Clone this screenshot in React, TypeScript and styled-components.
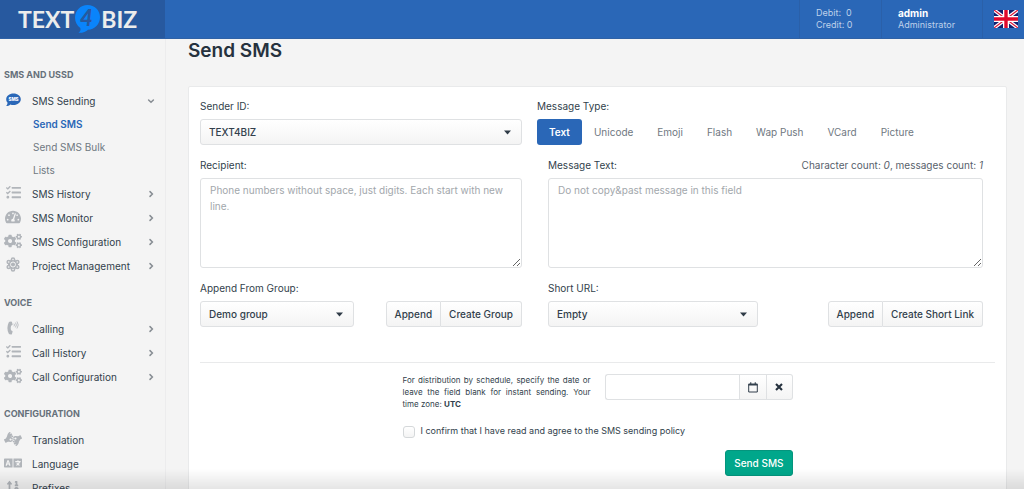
import React, { useState } from "react";
import styled, { createGlobalStyle } from "styled-components";
import {
  FaTasks,
  FaTachometerAlt,
  FaCogs,
  FaAmericanSignLanguageInterpreting,
  FaLanguage,
  FaSortNumericUp,
} from "react-icons/fa";

const color = {
  brand: "#2a67b7",
  brandDark: "#27599f",
  text: "#323f4c",
  muted: "#6f7881",
  page: "#f4f4f4",
  border: "#dfe1e3",
  icon: "#b1b5ba",
};

const GlobalStyle = createGlobalStyle`
  *, *::before, *::after { box-sizing: border-box; }
  body {
    margin: 0;
    background: ${color.page};
    color: ${color.text};
    font: 400 10px/16px Inter, "Liberation Sans", sans-serif;
  }
  button, input, select, textarea { font: inherit; color: inherit; margin: 0; }
  h1, h2, ul, p { margin: 0; padding: 0; }
  ul { list-style: none; }
  a { color: inherit; text-decoration: none; }
`;

const Page = styled.div`
  display: flex;
  flex-direction: column;
  height: 100vh;
  overflow: hidden;
`;

const Header = styled.header`
  display: flex;
  flex: none;
  height: 39px;
  background: ${color.brand};
  border-bottom: 1px solid #2f62a6;
  color: #fff;
`;

const Logo = styled.a`
  display: flex;
  align-items: center;
  flex: none;
  width: 165px;
  padding-left: 18px;
  background: ${color.brandDark};
  color: #ececec;
  font: 700 23px/38px Lato, sans-serif;
`;

const HeaderCell = styled.div<{ $width: number; $push?: boolean }>`
  display: flex;
  flex-direction: column;
  justify-content: center;
  width: ${(p) => p.$width}px;
  margin-left: ${(p) => (p.$push ? "auto" : "0")};
  padding-left: 16px;
  border-left: 1px solid #2a60a9;
  color: #bfd1ea;
  font-size: 9px;
  line-height: 12px;
  white-space: pre;
`;

const UserName = styled.strong`
  color: #fff;
  font-size: 10px;
  font-weight: 700;
`;

const LanguageButton = styled.button`
  display: flex;
  align-items: center;
  justify-content: flex-end;
  width: 42px;
  padding: 0 6px 0 0;
  border: 0;
  border-left: 1px solid #2a60a9;
  background: none;
`;

const Body = styled.div`
  display: flex;
  flex: 1;
  min-height: 0;
`;

const Sidebar = styled.nav`
  display: flex;
  flex-direction: column;
  gap: 13px;
  flex: none;
  width: 166px;
  padding-top: 24px;
  border-right: 1px solid #ececed;
  overflow: hidden;
`;

const SectionTitle = styled.h2`
  margin-bottom: 2px;
  padding-left: 4px;
  color: #66707a;
  font-size: 9px;
  font-weight: 700;
  line-height: 24px;
  text-transform: uppercase;
`;

const NavLink = styled.a`
  display: grid;
  grid-template-columns: 18px 1fr 12px;
  column-gap: 10px;
  align-items: center;
  height: 24px;
  padding: 0 7px 0 4px;
  white-space: nowrap;
`;

const NavIcon = styled.span<{ $active?: boolean }>`
  display: flex;
  justify-content: center;
  padding-bottom: 3px;
  color: ${(p) => (p.$active ? color.brand : color.icon)};
`;

const SubLink = styled.a<{ $active?: boolean }>`
  display: block;
  padding-left: 33px;
  color: ${(p) => (p.$active ? color.brand : color.muted)};
  font-weight: ${(p) => (p.$active ? 600 : 400)};
  line-height: 23px;
`;

const Main = styled.main`
  flex: 1;
  min-width: 0;
  padding: 0 17px 0 22px;
  overflow: hidden;
`;

const Title = styled.h1`
  margin-bottom: 23px;
  color: #26323e;
  font-size: 19px;
  font-weight: 600;
  line-height: 24px;
`;

const Card = styled.form`
  padding: 11px 11px 24px;
  border: 1px solid #e9eaeb;
  border-radius: 2px;
  background: #fff;
`;

const Columns = styled.div`
  display: grid;
  grid-template-columns: 322fr 458fr;
  column-gap: 15px;
`;

const Field = styled.div<{ $inset?: boolean }>`
  display: flex;
  flex-direction: column;
  gap: 5px;
  min-width: 0;
  margin-bottom: 12px;
  padding: ${(p) => (p.$inset ? "0 12px 0 11px" : "0")};
`;

const FieldHead = styled.div`
  display: flex;
  justify-content: space-between;
`;

const Counter = styled.span`
  color: #57616b;
`;

const SelectBox = styled.div<{ $width?: string }>`
  display: flex;
  position: relative;
  width: ${(p) => p.$width ?? "100%"};
`;

const Select = styled.select`
  width: 100%;
  height: 26px;
  padding: 0 8px;
  border: 1px solid ${color.border};
  border-radius: 3px;
  background: linear-gradient(#fff, #f4f4f4);
  font-weight: 500;
  appearance: none;
`;

const Caret = styled.svg`
  position: absolute;
  top: 11px;
  right: 11px;
  pointer-events: none;
`;

const Tabs = styled.div`
  display: flex;
`;

const Tab = styled.button<{ $active?: boolean }>`
  height: 26px;
  padding: 0 12px;
  border: 0;
  border-radius: 3px;
  background: ${(p) => (p.$active ? color.brand : "transparent")};
  color: ${(p) => (p.$active ? "#fff" : color.muted)};
  font-weight: ${(p) => (p.$active ? 600 : 400)};
`;

const TextArea = styled.textarea`
  display: block;
  width: 100%;
  height: 90px;
  padding: 3px 9px;
  border: 1px solid ${color.border};
  border-radius: 3px;
  background: #fff;
  line-height: 16px;
  resize: both;
  &::placeholder { color: #a2a7ac; }
`;

const Actions = styled.div`
  display: flex;
  justify-content: space-between;
`;

const ButtonGroup = styled.div`
  display: flex;
`;

const Button = styled.button`
  display: flex;
  align-items: center;
  justify-content: center;
  height: 26px;
  min-width: 26px;
  padding: 0 8px;
  border: 1px solid ${color.border};
  background: linear-gradient(#fff, #f4f4f4);
  font-weight: 500;
  white-space: nowrap;
  & + & { border-left: 0; }
  &:first-child { border-radius: 3px 0 0 3px; }
  &:last-child { border-radius: 0 3px 3px 0; }
`;

const Divider = styled.hr`
  height: 1px;
  margin: 23px 0 11px;
  border: 0;
  background: #e9eaeb;
`;

const Footer = styled.div`
  display: flex;
  flex-direction: column;
  max-width: 390px;
  margin: 0 auto;
`;

const Schedule = styled.div`
  display: grid;
  grid-template-columns: minmax(0, 1fr) minmax(0, 1fr);
  column-gap: 14px;
`;

const ScheduleNote = styled.label`
  font-size: 8px;
  line-height: 12px;
  text-align: justify;
`;

const DateInput = styled.input`
  flex: 1;
  min-width: 0;
  height: 26px;
  padding: 0 9px;
  border: 1px solid ${color.border};
  border-right-width: 0;
  border-radius: 3px 0 0 3px;
  background: #fff;
`;

const Consent = styled.label`
  display: flex;
  gap: 6px;
  margin: 14px 0 12px;
  font-size: 9px;
  line-height: 13px;
`;

const Checkbox = styled.input`
  width: 12px;
  height: 12px;
  margin-top: 2px;
  border: 1px solid #d5d8da;
  border-radius: 3px;
  background: linear-gradient(#fff, #f4f4f4);
  appearance: none;
  &:checked { background: ${color.brand}; }
`;

const Submit = styled.button`
  align-self: flex-end;
  height: 26px;
  padding: 0 8px;
  border: 1px solid #04957d;
  border-radius: 3px;
  background: #00a78b;
  color: #fff;
  font-weight: 500;
`;

const BottomShade = styled.div`
  position: fixed;
  right: 0;
  bottom: 0;
  left: 0;
  height: 20px;
  background: linear-gradient(rgba(0, 0, 0, 0), rgba(0, 0, 0, 0.1));
  pointer-events: none;
`;

const LogoBubble = () => (
  <svg width="27" height="30" viewBox="0 0 26 30" aria-hidden="true">
    <path
      fill="#0a84fb"
      d="M13 1C20 1 25.500 6.300 25.500 13.200S20 25.500 13.500 25.700C11.500 27.800 8 29 4 28.800C5.800 27.700 6.400 26 5.800 24C2.500 21.700.5 18 .5 13.500C.5 6.500 6 1 13 1Z"
    />
    <text x="12" y="22" textAnchor="middle" fill={color.brandDark} fontFamily="Lato, sans-serif" fontSize="22" fontWeight="900" fontStyle="italic">
      4
    </text>
  </svg>
);

const Flag = () => (
  <svg width="24" height="18" viewBox="0 0 24 18" aria-hidden="true">
    <rect width="24" height="18" rx="1" fill="#10206f" />
    <path d="M0 0L24 18M24 0L0 18" stroke="#fff" strokeWidth="3.600" />
    <path d="M0 0L24 18M24 0L0 18" stroke="#dc1638" strokeWidth="1.200" />
    <path d="M12 0V18M0 9H24" stroke="#fff" strokeWidth="6" />
    <path d="M12 0V18M0 9H24" stroke="#e0092c" strokeWidth="3.400" />
  </svg>
);

const SmsIcon = () => (
  <svg width="15" height="14" viewBox="0 0 15 14" aria-hidden="true">
    <path fill="currentColor" d="M7.500.5C11.600.5 14.800 3 14.800 6.200S11.600 12 7.500 12C6.400 12 5.300 11.800 4.400 11.400C3.300 12.300 1.800 13 .2 13C1 12.100 1.500 11 1.600 9.800C.7 8.800.2 7.600.2 6.200C.2 3 3.400.5 7.500.5Z" />
    <text x="7.500" y="8" textAnchor="middle" fill="#fff" fontFamily="Inter, sans-serif" fontSize="4.500" fontWeight="800">
      SMS
    </text>
  </svg>
);

const ProjectIcon = () => (
  <svg width="14" height="15" viewBox="0 0 14 15" aria-hidden="true" fill="currentColor">
    <circle cx="7" cy="7.500" r="5" />
    <circle cx="7" cy="2.500" r="2.300" />
    <circle cx="7" cy="12.500" r="2.300" />
    <circle cx="2.700" cy="5" r="2.300" />
    <circle cx="11.300" cy="5" r="2.300" />
    <circle cx="2.700" cy="10" r="2.300" />
    <circle cx="11.300" cy="10" r="2.300" />
    <circle cx="7" cy="7.500" r="2.500" fill="none" stroke={color.page} strokeWidth="1" />
    <g fill={color.page}>
      <circle cx="7" cy="2.500" r=".8" />
      <circle cx="7" cy="12.500" r=".8" />
      <circle cx="2.700" cy="5" r=".8" />
      <circle cx="11.300" cy="5" r=".8" />
      <circle cx="2.700" cy="10" r=".8" />
      <circle cx="11.300" cy="10" r=".8" />
    </g>
  </svg>
);

const CallIcon = () => (
  <svg width="12" height="14" viewBox="0 0 12 14" aria-hidden="true">
    <path fill="currentColor" d="M2.500.8L4.200.5Q4.700.5 4.900 1L5.600 3.300Q5.700 3.800 5.300 4.100L4.100 4.700Q3.400 7 4.100 9.300L5.300 9.900Q5.700 10.200 5.600 10.700L4.900 13Q4.700 13.500 4.200 13.500L2.500 13.200Q2 13.100 1.700 12.500Q-.9 7 1.700 1.500Q2 .9 2.500.8Z" />
    <path fill="none" stroke="currentColor" strokeLinecap="round" strokeWidth=".8" d="M7.200 3Q8 4 7.200 5M8.700 1.900Q10.300 4 8.700 6.100M10.200.8Q12.500 4 10.200 7.200" />
  </svg>
);

const Chevron = ({ down }: { down?: boolean }) => (
  <svg width="10" height="10" viewBox="0 0 10 10" aria-hidden="true">
    <path
      d={down ? "M2.600 4L5 6.300L7.400 4" : "M4 2.600L6.400 5L4 7.400"}
      fill="none"
      stroke="#878d93"
      strokeWidth="1.500"
      strokeLinecap="round"
    />
  </svg>
);

const CalendarIcon = () => (
  <svg width="10" height="11" viewBox="0 0 10 11" aria-hidden="true">
    <path fill="none" stroke="currentColor" strokeWidth="1" d="M.7 2.200H9.300V10H.7Z" />
    <path fill="currentColor" d="M.5 1.700H9.500V3.400H.5ZM2.200.3H3.300V2H2.200ZM6.700.3H7.800V2H6.700Z" />
  </svg>
);

const CrossIcon = () => (
  <svg width="8" height="8" viewBox="0 0 8 8" aria-hidden="true">
    <path stroke="#26323e" strokeWidth="2.100" d="M1 1L7 7M7 1L1 7" />
  </svg>
);

const Dropdown = ({ id, width, options }: { id: string; width?: string; options: string[] }) => (
  <SelectBox $width={width}>
    <Select id={id}>
      {options.map((o) => (
        <option key={o}>{o}</option>
      ))}
    </Select>
    <Caret width="7" height="5" viewBox="0 0 7 5" aria-hidden="true">
      <path fill="#2f3b47" d="M0 .5H7L3.500 4.500Z" />
    </Caret>
  </SelectBox>
);

type Item = { label: string; icon: React.ReactNode; open?: boolean; leaf?: boolean };

const sections: { title: string; items: Item[] }[] = [
  {
    title: "SMS and USSD",
    items: [
      { label: "SMS Sending", icon: <SmsIcon />, open: true },
      { label: "SMS History", icon: <FaTasks size={15} /> },
      { label: "SMS Monitor", icon: <FaTachometerAlt size={16} /> },
      { label: "SMS Configuration", icon: <FaCogs size={18} /> },
      { label: "Project Management", icon: <ProjectIcon /> },
    ],
  },
  {
    title: "Voice",
    items: [
      { label: "Calling", icon: <CallIcon /> },
      { label: "Call History", icon: <FaTasks size={15} /> },
      { label: "Call Configuration", icon: <FaCogs size={18} /> },
    ],
  },
  {
    title: "Configuration",
    items: [
      { label: "Translation", icon: <FaAmericanSignLanguageInterpreting size={18} />, leaf: true },
      { label: "Language", icon: <FaLanguage size={18} />, leaf: true },
      { label: "Prefixes", icon: <FaSortNumericUp size={14} />, leaf: true },
    ],
  },
];

const subItems = ["Send SMS", "Send SMS Bulk", "Lists"];
const messageTypes = ["Text", "Unicode", "Emoji", "Flash", "Wap Push", "VCard", "Picture"];

export default function App() {
  const [type, setType] = useState("Text");

  return (
    <Page>
      <GlobalStyle />
      <Header>
        <Logo href="#" aria-label="TEXT4BIZ">
          TEXT
          <LogoBubble />
          BIZ
        </Logo>
        <HeaderCell $width={82} $push>
          <span>{"Debit:  0"}</span>
          <span>Credit: 0</span>
        </HeaderCell>
        <HeaderCell $width={101}>
          <UserName>admin</UserName>
          <span>Administrator</span>
        </HeaderCell>
        <LanguageButton type="button" aria-label="English">
          <Flag />
        </LanguageButton>
      </Header>
      <Body>
        <Sidebar>
          {sections.map((s) => (
            <section key={s.title}>
              <SectionTitle>{s.title}</SectionTitle>
              <ul>
                {s.items.map((item) => (
                  <li key={item.label}>
                    <NavLink href="#">
                      <NavIcon $active={item.open}>{item.icon}</NavIcon>
                      {item.label}
                      {!item.leaf && <Chevron down={item.open} />}
                    </NavLink>
                    {item.open && (
                      <ul>
                        {subItems.map((sub, i) => (
                          <li key={sub}>
                            <SubLink href="#" $active={i === 0}>
                              {sub}
                            </SubLink>
                          </li>
                        ))}
                      </ul>
                    )}
                  </li>
                ))}
              </ul>
            </section>
          ))}
        </Sidebar>
        <Main>
          <Title>Send SMS</Title>
          <Card onSubmit={(e) => e.preventDefault()}>
            <Columns>
              <Field>
                <FieldHead>
                  <label htmlFor="sender">Sender ID:</label>
                </FieldHead>
                <Dropdown id="sender" options={["TEXT4BIZ"]} />
              </Field>
              <Field>
                <FieldHead>
                  <span id="type-label">Message Type:</span>
                </FieldHead>
                <Tabs role="tablist" aria-labelledby="type-label">
                  {messageTypes.map((t) => (
                    <Tab key={t} type="button" role="tab" aria-selected={t === type} $active={t === type} onClick={() => setType(t)}>
                      {t}
                    </Tab>
                  ))}
                </Tabs>
              </Field>
              <Field>
                <FieldHead>
                  <label htmlFor="recipient">Recipient:</label>
                </FieldHead>
                <TextArea id="recipient" placeholder="Phone numbers without space, just digits. Each start with new line." />
              </Field>
              <Field $inset>
                <FieldHead>
                  <label htmlFor="message">Message Text:</label>
                  <Counter>
                    Character count: <i>0</i>, messages count: <i>1</i>
                  </Counter>
                </FieldHead>
                <TextArea id="message" placeholder="Do not copy&amp;past message in this field" />
              </Field>
              <Field>
                <FieldHead>
                  <label htmlFor="group">Append From Group:</label>
                </FieldHead>
                <Actions>
                  <Dropdown id="group" width="154px" options={["Demo group"]} />
                  <ButtonGroup>
                    <Button type="button">Append</Button>
                    <Button type="button">Create Group</Button>
                  </ButtonGroup>
                </Actions>
              </Field>
              <Field $inset>
                <FieldHead>
                  <label htmlFor="url">Short URL:</label>
                </FieldHead>
                <Actions>
                  <Dropdown id="url" width="210px" options={["Empty"]} />
                  <ButtonGroup>
                    <Button type="button">Append</Button>
                    <Button type="button">Create Short Link</Button>
                  </ButtonGroup>
                </Actions>
              </Field>
            </Columns>
            <Divider />
            <Footer>
              <Schedule>
                <ScheduleNote htmlFor="date">
                  For distribution by schedule, specify the date or leave the field blank for instant sending. Your time zone: <b>UTC</b>
                </ScheduleNote>
                <ButtonGroup>
                  <DateInput id="date" type="text" />
                  <Button type="button" aria-label="Open calendar">
                    <CalendarIcon />
                  </Button>
                  <Button type="button" aria-label="Clear date">
                    <CrossIcon />
                  </Button>
                </ButtonGroup>
              </Schedule>
              <Consent>
                <Checkbox type="checkbox" />
                I confirm that I have read and agree to the SMS sending policy
              </Consent>
              <Submit type="submit">Send SMS</Submit>
            </Footer>
          </Card>
        </Main>
      </Body>
      <BottomShade />
    </Page>
  );
}
